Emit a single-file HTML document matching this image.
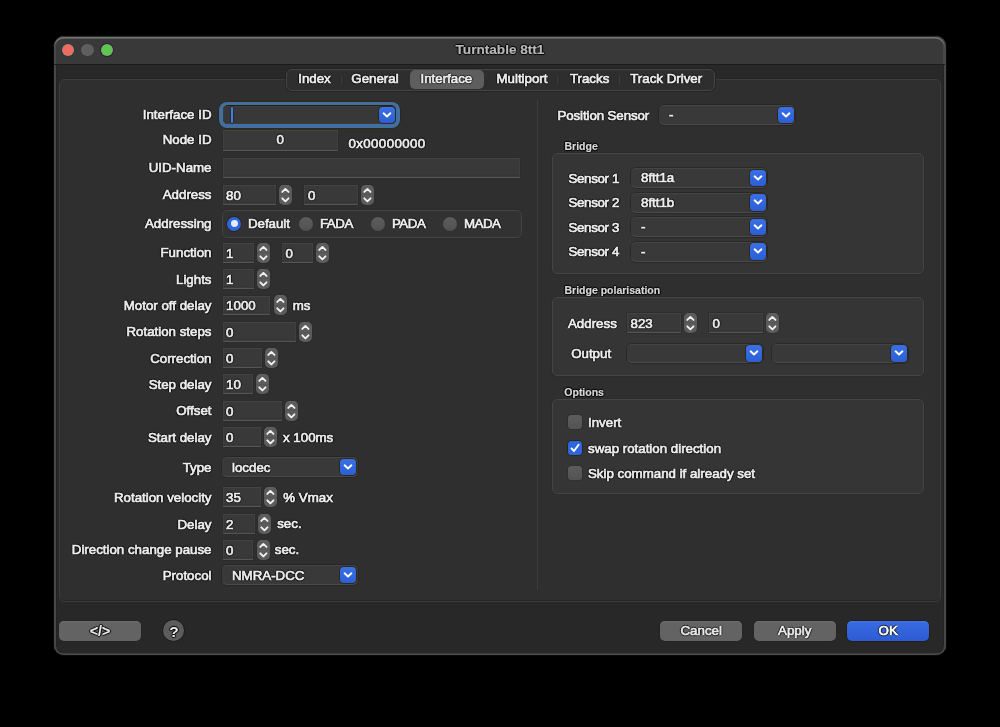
<!DOCTYPE html><html><head><meta charset="utf-8"><title>Turntable 8tt1</title><style>
*{margin:0;padding:0;box-sizing:border-box}
html,body{width:1000px;height:727px;overflow:hidden;background:#000}
body{position:relative;font-family:"Liberation Sans", sans-serif;font-size:13.3px;color:#e6e6e6}
#root{position:absolute;left:0;top:0;width:1000px;height:727px;will-change:transform}
div{position:absolute}
.t,.ft,.pt{white-space:nowrap;line-height:16px;font-size:13.3px;color:#eeeeee;-webkit-text-stroke:0.7px currentColor;text-shadow:1px 0 1px #000,-1px 0 1px #000,0 1px 1px #000,0 -1px 1px #000}
.r{text-align:right}
.c{text-align:center}
.b11{font-size:10.5px;font-weight:bold;color:#d8d8d8;-webkit-text-stroke:0.2px currentColor}
.win{border-radius:10px;background:#282828;box-shadow:0 0 0 0.8px #0c0c0c, inset 2px 0 0 #474747, inset -2px 0 0 #474747, inset 0 -1.5px 0 #4e4e4e, inset 3px 0 0 #232323, inset -3px 0 0 #232323}
.tbar{background:#393939;border-radius:10px 10px 0 0;box-shadow:inset 0 1.5px 0 #777, inset 2px 0 0 #474747, inset -2px 0 0 #474747, 0 1px 0 #1b1b1b}
.tabbox{background:#2f2f2f;border:1px solid #3b3b3b;border-bottom-width:1.4px;border-radius:5px;box-shadow:inset 0 -1px 0 #252525, 0 -0.5px 0 #242424}
.seg{background:#2e2e2e;border:1px solid #454545;border-radius:6px;box-shadow:0 0 0 0.7px #202020}
.segsel{background:#5e5e5e;border-radius:5px}
.segsep{background:#3b3b3b;width:1px}
.fld{background:#393939;box-shadow:0 0 0 0.7px #2b2b2b, inset 0 -1.2px 0 #555, inset 0 -2.2px 0 #333, inset 0 1px 0 #444, inset 1px 0 0 #404040, inset -1px 0 0 #404040}
.ft{position:absolute;left:3.5px;right:3.5px;top:2.9px}
.stp{background:#5c5c5c;border-radius:5px;box-shadow:0 0 0 0.6px #2a2a2a, inset 0 0.5px 0 #686868}
.sm{left:0;right:0;top:50%;height:1px;margin-top:-0.5px;background:#545454}
.su{left:0;top:0;width:13px;height:10px;line-height:0}
.sd{left:0;bottom:0;width:13px;height:10px;line-height:0}
.pop{background:#393939;border-radius:5px;box-shadow:0 0 0 0.8px #262626, inset 0 1px 0 #444, inset 0 -1px 0 #4a4a4a}
.pt{position:absolute;left:10px;top:2.4px}
.pb{right:1.3px;top:1.8px;width:16px;height:16.3px;border-radius:4px;background:linear-gradient(#3a6fe6,#2c5fd6);box-shadow:0 0 0 0.8px #2a2410;line-height:0}
.grp{background:#353535;border:1px solid #454545;border-radius:5px;box-shadow:0 0 0 0.5px #2a2a2a}
.radio{width:14px;height:14px;border-radius:50%;background:linear-gradient(#5c5c5c,#525252);box-shadow:0 0 0 0.6px #2c2c2c}
.rsel{background:#2f66e0;box-shadow:0 0 0 0.8px #2a2410}
.rdot{left:3.6px;top:3.6px;width:6.8px;height:6.8px;border-radius:50%;background:#e4ebfb}
.chk{width:14px;height:14px;border-radius:3.5px;background:linear-gradient(#5c5c5c,#535353);box-shadow:0 0 0 0.6px #2c2c2c}
.csel{background:#2f66e0;box-shadow:0 0 0 0.8px #2a2410}
.btn{background:#636363;border-radius:5px;box-shadow:0 0 0 0.6px #222, inset 0 1px 0 #6d6d6d}
.btnok{background:linear-gradient(#3a6be2,#2c5bd3);box-shadow:0 0 0 0.8px #231d0c, inset 0 1px 0 #4575e4}
</style></head><body><div id="root">
<div class="win" style="left:53.5px;top:35.8px;width:892.2px;height:619.7px;"></div>
<div class="tbar" style="left:54px;top:36.6px;width:891.2px;height:27.3px;"></div>
<div style="left:61.89999999999999px;top:44.099999999999994px;width:12.4px;height:12.4px;border-radius:50%;background:#ee6b5f;box-shadow:0 0 0 0.9px #0d4848"></div>
<div style="left:81.4px;top:44.199999999999996px;width:12.2px;height:12.2px;border-radius:50%;background:#5e5e5e;box-shadow:0 0 0 0.9px #383838"></div>
<div style="left:100.8px;top:44.099999999999994px;width:12.4px;height:12.4px;border-radius:50%;background:#60c452;box-shadow:0 0 0 0.9px #3a1240"></div>
<div class="t c" style="left:400px;width:200px;top:42.40px;font-weight:bold;font-size:13.6px;color:#b8b8b8;-webkit-text-stroke:0.2px currentColor">Turntable 8tt1</div>
<div class="tabbox" style="left:59.2px;top:78.9px;width:881.7px;height:523.1px;"></div>
<div class="" style="left:537px;top:100px;width:1px;height:489.8px;background:#3d3d3d"></div>
<div class="seg" style="left:286px;top:69px;width:429px;height:21.5px;"></div>
<div class="segsel" style="left:409.5px;top:70px;width:74px;height:19.2px;"></div>
<div class="segsep" style="left:340.5px;top:75px;height:10px"></div>
<div class="segsep" style="left:557px;top:75px;height:10px"></div>
<div class="segsep" style="left:619.3px;top:75px;height:10px"></div>
<div class="t c" style="left:214.5px;width:200px;top:71.30px;">Index</div>
<div class="t c" style="left:275px;width:200px;top:71.30px;">General</div>
<div class="t c" style="left:346.4px;width:200px;top:71.30px;">Interface</div>
<div class="t c" style="left:422px;width:200px;top:71.30px;">Multiport</div>
<div class="t c" style="left:489.6px;width:200px;top:71.30px;">Tracks</div>
<div class="t c" style="left:566.2px;width:200px;top:71.30px;">Track Driver</div>
<div class="t r" style="right:788.5px;top:107.10px;">Interface ID</div>
<div class="t r" style="right:788.5px;top:132.10px;">Node ID</div>
<div class="t r" style="right:788.5px;top:160.00px;">UID-Name</div>
<div class="t r" style="right:788.5px;top:186.90px;">Address</div>
<div class="t r" style="right:788.5px;top:215.80px;">Addressing</div>
<div class="t r" style="right:788.5px;top:245.40px;">Function</div>
<div class="t r" style="right:788.5px;top:271.80px;">Lights</div>
<div class="t r" style="right:788.5px;top:298.20px;">Motor off delay</div>
<div class="t r" style="right:788.5px;top:324.20px;">Rotation steps</div>
<div class="t r" style="right:788.5px;top:350.60px;">Correction</div>
<div class="t r" style="right:788.5px;top:377.00px;">Step delay</div>
<div class="t r" style="right:788.5px;top:403.10px;">Offset</div>
<div class="t r" style="right:788.5px;top:429.70px;">Start delay</div>
<div class="t r" style="right:788.5px;top:459.80px;">Type</div>
<div class="t r" style="right:788.5px;top:489.90px;">Rotation velocity</div>
<div class="t r" style="right:788.5px;top:516.80px;">Delay</div>
<div class="t r" style="right:788.5px;top:542.00px;">Direction change pause</div>
<div class="t r" style="right:788.5px;top:567.70px;">Protocol</div>
<div style="left:218.8px;top:101.6px;width:181.4px;height:26.3px;border-radius:8px;background:#41709e;box-shadow:0 0 0 0.6px #2a2410"></div>
<div style="left:222.6px;top:105.4px;width:173.8px;height:18.7px;border-radius:5px;background:#231f12"></div>
<div style="left:223.3px;top:106px;width:172.4px;height:17.5px;border-radius:4.5px;background:#383838;box-shadow:inset 0 0 0 0.7px #404040"></div>
<div style="left:231px;top:107px;width:2.3px;height:16.2px;border-radius:1px;background:#3d7ef2;box-shadow:0 0 0 0.7px #2a2410"></div>
<div class="pb" style="left:379px;top:106.8px;right:auto"><svg width="16" height="16" viewBox="0 0 16 16"><path d="M4.6 6.3 L8 9.5 L11.4 6.3" fill="none" stroke="#ffffff" stroke-width="1.9" stroke-linecap="round" stroke-linejoin="round"/></svg></div>
<div class="fld" style="left:222.6px;top:129.6px;width:115.4px;height:21.2px;"><span class="ft" style="text-align:center">0</span></div>
<div class="t" style="left:348.5px;top:135.60px;letter-spacing:0.38px">0x00000000</div>
<div class="fld" style="left:222.6px;top:157.8px;width:297.9px;height:20.5px;"></div>
<div class="fld" style="left:222.6px;top:185px;width:53.4px;height:19.6px;"><span class="ft" style="text-align:left">80</span></div>
<div class="stp" style="left:279.3px;top:184.5px;width:13px;height:20.5px;"><div class="sm"></div><div class="su"><svg width="13" height="10" viewBox="0 0 13 10"><path d="M3.3 6.9 L6.4 3.9 L9.5 6.9" fill="none" stroke="#f2f2f2" stroke-width="1.9" stroke-linecap="round" stroke-linejoin="round"/></svg></div><div class="sd"><svg width="13" height="10" viewBox="0 0 13 10"><path d="M3.3 3.3 L6.4 6.4 L9.5 3.3" fill="none" stroke="#f2f2f2" stroke-width="1.9" stroke-linecap="round" stroke-linejoin="round"/></svg></div></div>
<div class="fld" style="left:304.4px;top:185px;width:53.6px;height:19.6px;"><span class="ft" style="text-align:left">0</span></div>
<div class="stp" style="left:361.3px;top:184.5px;width:13px;height:20.5px;"><div class="sm"></div><div class="su"><svg width="13" height="10" viewBox="0 0 13 10"><path d="M3.3 6.9 L6.4 3.9 L9.5 6.9" fill="none" stroke="#f2f2f2" stroke-width="1.9" stroke-linecap="round" stroke-linejoin="round"/></svg></div><div class="sd"><svg width="13" height="10" viewBox="0 0 13 10"><path d="M3.3 3.3 L6.4 6.4 L9.5 3.3" fill="none" stroke="#f2f2f2" stroke-width="1.9" stroke-linecap="round" stroke-linejoin="round"/></svg></div></div>
<div class="grp" style="left:221.5px;top:210.4px;width:300.2px;height:27.2px;background:#323232;border-color:#454545"></div>
<div class="radio rsel" style="left:227.4px;top:216.9px"><div class="rdot"></div></div>
<div class="t" style="left:247.9px;top:216.00px;">Default</div>
<div class="radio" style="left:299.4px;top:216.9px"></div>
<div class="t" style="left:319.9px;top:216.00px;letter-spacing:-0.45px">FADA</div>
<div class="radio" style="left:371.4px;top:216.9px"></div>
<div class="t" style="left:391.9px;top:216.00px;letter-spacing:-0.45px">PADA</div>
<div class="radio" style="left:443.4px;top:216.9px"></div>
<div class="t" style="left:463.9px;top:216.00px;letter-spacing:-0.45px">MADA</div>
<div class="fld" style="left:222.6px;top:243px;width:31.4px;height:19.7px;"><span class="ft" style="text-align:left">1</span></div>
<div class="stp" style="left:257.3px;top:242.8px;width:13px;height:20.2px;"><div class="sm"></div><div class="su"><svg width="13" height="10" viewBox="0 0 13 10"><path d="M3.3 6.9 L6.4 3.9 L9.5 6.9" fill="none" stroke="#f2f2f2" stroke-width="1.9" stroke-linecap="round" stroke-linejoin="round"/></svg></div><div class="sd"><svg width="13" height="10" viewBox="0 0 13 10"><path d="M3.3 3.3 L6.4 6.4 L9.5 3.3" fill="none" stroke="#f2f2f2" stroke-width="1.9" stroke-linecap="round" stroke-linejoin="round"/></svg></div></div>
<div class="fld" style="left:282px;top:243px;width:31px;height:19.7px;"><span class="ft" style="text-align:left">0</span></div>
<div class="stp" style="left:316.3px;top:242.8px;width:13px;height:20.2px;"><div class="sm"></div><div class="su"><svg width="13" height="10" viewBox="0 0 13 10"><path d="M3.3 6.9 L6.4 3.9 L9.5 6.9" fill="none" stroke="#f2f2f2" stroke-width="1.9" stroke-linecap="round" stroke-linejoin="round"/></svg></div><div class="sd"><svg width="13" height="10" viewBox="0 0 13 10"><path d="M3.3 3.3 L6.4 6.4 L9.5 3.3" fill="none" stroke="#f2f2f2" stroke-width="1.9" stroke-linecap="round" stroke-linejoin="round"/></svg></div></div>
<div class="fld" style="left:222.6px;top:269px;width:31.4px;height:19.7px;"><span class="ft" style="text-align:left">1</span></div>
<div class="stp" style="left:257.3px;top:268.8px;width:13px;height:20.2px;"><div class="sm"></div><div class="su"><svg width="13" height="10" viewBox="0 0 13 10"><path d="M3.3 6.9 L6.4 3.9 L9.5 6.9" fill="none" stroke="#f2f2f2" stroke-width="1.9" stroke-linecap="round" stroke-linejoin="round"/></svg></div><div class="sd"><svg width="13" height="10" viewBox="0 0 13 10"><path d="M3.3 3.3 L6.4 6.4 L9.5 3.3" fill="none" stroke="#f2f2f2" stroke-width="1.9" stroke-linecap="round" stroke-linejoin="round"/></svg></div></div>
<div class="fld" style="left:222.6px;top:295.5px;width:47.699999999999996px;height:19.7px;"><span class="ft" style="text-align:left">1000</span></div>
<div class="stp" style="left:273.5px;top:295.3px;width:13px;height:20.2px;"><div class="sm"></div><div class="su"><svg width="13" height="10" viewBox="0 0 13 10"><path d="M3.3 6.9 L6.4 3.9 L9.5 6.9" fill="none" stroke="#f2f2f2" stroke-width="1.9" stroke-linecap="round" stroke-linejoin="round"/></svg></div><div class="sd"><svg width="13" height="10" viewBox="0 0 13 10"><path d="M3.3 3.3 L6.4 6.4 L9.5 3.3" fill="none" stroke="#f2f2f2" stroke-width="1.9" stroke-linecap="round" stroke-linejoin="round"/></svg></div></div>
<div class="t" style="left:292.8px;top:297.90px;">ms</div>
<div class="fld" style="left:222.6px;top:322.2px;width:73.4px;height:19.7px;"><span class="ft" style="text-align:left">0</span></div>
<div class="stp" style="left:299.1px;top:322.0px;width:13px;height:20.2px;"><div class="sm"></div><div class="su"><svg width="13" height="10" viewBox="0 0 13 10"><path d="M3.3 6.9 L6.4 3.9 L9.5 6.9" fill="none" stroke="#f2f2f2" stroke-width="1.9" stroke-linecap="round" stroke-linejoin="round"/></svg></div><div class="sd"><svg width="13" height="10" viewBox="0 0 13 10"><path d="M3.3 3.3 L6.4 6.4 L9.5 3.3" fill="none" stroke="#f2f2f2" stroke-width="1.9" stroke-linecap="round" stroke-linejoin="round"/></svg></div></div>
<div class="fld" style="left:222.6px;top:348.3px;width:39.6px;height:19.7px;"><span class="ft" style="text-align:left">0</span></div>
<div class="stp" style="left:265.1px;top:348.1px;width:13px;height:20.2px;"><div class="sm"></div><div class="su"><svg width="13" height="10" viewBox="0 0 13 10"><path d="M3.3 6.9 L6.4 3.9 L9.5 6.9" fill="none" stroke="#f2f2f2" stroke-width="1.9" stroke-linecap="round" stroke-linejoin="round"/></svg></div><div class="sd"><svg width="13" height="10" viewBox="0 0 13 10"><path d="M3.3 3.3 L6.4 6.4 L9.5 3.3" fill="none" stroke="#f2f2f2" stroke-width="1.9" stroke-linecap="round" stroke-linejoin="round"/></svg></div></div>
<div class="fld" style="left:222.6px;top:374.4px;width:30.599999999999998px;height:19.7px;"><span class="ft" style="text-align:left">10</span></div>
<div class="stp" style="left:256.1px;top:374.2px;width:13px;height:20.2px;"><div class="sm"></div><div class="su"><svg width="13" height="10" viewBox="0 0 13 10"><path d="M3.3 6.9 L6.4 3.9 L9.5 6.9" fill="none" stroke="#f2f2f2" stroke-width="1.9" stroke-linecap="round" stroke-linejoin="round"/></svg></div><div class="sd"><svg width="13" height="10" viewBox="0 0 13 10"><path d="M3.3 3.3 L6.4 6.4 L9.5 3.3" fill="none" stroke="#f2f2f2" stroke-width="1.9" stroke-linecap="round" stroke-linejoin="round"/></svg></div></div>
<div class="fld" style="left:222.6px;top:401px;width:59.4px;height:19.7px;"><span class="ft" style="text-align:left">0</span></div>
<div class="stp" style="left:285.3px;top:400.8px;width:13px;height:20.2px;"><div class="sm"></div><div class="su"><svg width="13" height="10" viewBox="0 0 13 10"><path d="M3.3 6.9 L6.4 3.9 L9.5 6.9" fill="none" stroke="#f2f2f2" stroke-width="1.9" stroke-linecap="round" stroke-linejoin="round"/></svg></div><div class="sd"><svg width="13" height="10" viewBox="0 0 13 10"><path d="M3.3 3.3 L6.4 6.4 L9.5 3.3" fill="none" stroke="#f2f2f2" stroke-width="1.9" stroke-linecap="round" stroke-linejoin="round"/></svg></div></div>
<div class="fld" style="left:222.6px;top:427.3px;width:38.4px;height:19.7px;"><span class="ft" style="text-align:left">0</span></div>
<div class="stp" style="left:264.1px;top:427.1px;width:13px;height:20.2px;"><div class="sm"></div><div class="su"><svg width="13" height="10" viewBox="0 0 13 10"><path d="M3.3 6.9 L6.4 3.9 L9.5 6.9" fill="none" stroke="#f2f2f2" stroke-width="1.9" stroke-linecap="round" stroke-linejoin="round"/></svg></div><div class="sd"><svg width="13" height="10" viewBox="0 0 13 10"><path d="M3.3 3.3 L6.4 6.4 L9.5 3.3" fill="none" stroke="#f2f2f2" stroke-width="1.9" stroke-linecap="round" stroke-linejoin="round"/></svg></div></div>
<div class="t" style="left:283px;top:429.70px;">x 100ms</div>
<div class="fld" style="left:222.6px;top:487.2px;width:38.4px;height:19.7px;"><span class="ft" style="text-align:left">35</span></div>
<div class="stp" style="left:264.1px;top:487.0px;width:13px;height:20.2px;"><div class="sm"></div><div class="su"><svg width="13" height="10" viewBox="0 0 13 10"><path d="M3.3 6.9 L6.4 3.9 L9.5 6.9" fill="none" stroke="#f2f2f2" stroke-width="1.9" stroke-linecap="round" stroke-linejoin="round"/></svg></div><div class="sd"><svg width="13" height="10" viewBox="0 0 13 10"><path d="M3.3 3.3 L6.4 6.4 L9.5 3.3" fill="none" stroke="#f2f2f2" stroke-width="1.9" stroke-linecap="round" stroke-linejoin="round"/></svg></div></div>
<div class="t" style="left:283.3px;top:489.60px;">% Vmax</div>
<div class="fld" style="left:222.6px;top:514px;width:32.4px;height:19.7px;"><span class="ft" style="text-align:left">2</span></div>
<div class="stp" style="left:258.1px;top:513.8px;width:13px;height:20.2px;"><div class="sm"></div><div class="su"><svg width="13" height="10" viewBox="0 0 13 10"><path d="M3.3 6.9 L6.4 3.9 L9.5 6.9" fill="none" stroke="#f2f2f2" stroke-width="1.9" stroke-linecap="round" stroke-linejoin="round"/></svg></div><div class="sd"><svg width="13" height="10" viewBox="0 0 13 10"><path d="M3.3 3.3 L6.4 6.4 L9.5 3.3" fill="none" stroke="#f2f2f2" stroke-width="1.9" stroke-linecap="round" stroke-linejoin="round"/></svg></div></div>
<div class="t" style="left:277.2px;top:516.40px;">sec.</div>
<div class="fld" style="left:222.6px;top:540px;width:30.4px;height:19.7px;"><span class="ft" style="text-align:left">0</span></div>
<div class="stp" style="left:256.5px;top:539.8px;width:13px;height:20.2px;"><div class="sm"></div><div class="su"><svg width="13" height="10" viewBox="0 0 13 10"><path d="M3.3 6.9 L6.4 3.9 L9.5 6.9" fill="none" stroke="#f2f2f2" stroke-width="1.9" stroke-linecap="round" stroke-linejoin="round"/></svg></div><div class="sd"><svg width="13" height="10" viewBox="0 0 13 10"><path d="M3.3 3.3 L6.4 6.4 L9.5 3.3" fill="none" stroke="#f2f2f2" stroke-width="1.9" stroke-linecap="round" stroke-linejoin="round"/></svg></div></div>
<div class="t" style="left:274.8px;top:542.40px;">sec.</div>
<div class="pop" style="left:222px;top:457.2px;width:135.5px;height:20px;"><span class="pt">locdec</span><div class="pb"><svg width="16" height="16" viewBox="0 0 16 16"><path d="M4.6 6.3 L8 9.5 L11.4 6.3" fill="none" stroke="#ffffff" stroke-width="1.9" stroke-linecap="round" stroke-linejoin="round"/></svg></div></div>
<div class="pop" style="left:222px;top:565.4px;width:135.5px;height:20px;"><span class="pt">NMRA-DCC</span><div class="pb"><svg width="16" height="16" viewBox="0 0 16 16"><path d="M4.6 6.3 L8 9.5 L11.4 6.3" fill="none" stroke="#ffffff" stroke-width="1.9" stroke-linecap="round" stroke-linejoin="round"/></svg></div></div>
<div class="t" style="left:557.5px;top:107.90px;letter-spacing:-0.1px">Position Sensor</div>
<div class="pop" style="left:659px;top:105px;width:136.3px;height:19.8px;"><span class="pt">-</span><div class="pb"><svg width="16" height="16" viewBox="0 0 16 16"><path d="M4.6 6.3 L8 9.5 L11.4 6.3" fill="none" stroke="#ffffff" stroke-width="1.9" stroke-linecap="round" stroke-linejoin="round"/></svg></div></div>
<div class="t b11" style="left:564.5px;top:137.80px;">Bridge</div>
<div class="grp" style="left:552.4px;top:153px;width:371.6px;height:120.5px;"></div>
<div class="t" style="left:568.4px;top:170.60px;letter-spacing:-0.3px">Sensor 1</div>
<div class="pop" style="left:631px;top:168.1px;width:136px;height:20px;"><span class="pt">8ftt1a</span><div class="pb"><svg width="16" height="16" viewBox="0 0 16 16"><path d="M4.6 6.3 L8 9.5 L11.4 6.3" fill="none" stroke="#ffffff" stroke-width="1.9" stroke-linecap="round" stroke-linejoin="round"/></svg></div></div>
<div class="t" style="left:568.4px;top:195.10px;letter-spacing:-0.3px">Sensor 2</div>
<div class="pop" style="left:631px;top:192.6px;width:136px;height:20px;"><span class="pt">8ftt1b</span><div class="pb"><svg width="16" height="16" viewBox="0 0 16 16"><path d="M4.6 6.3 L8 9.5 L11.4 6.3" fill="none" stroke="#ffffff" stroke-width="1.9" stroke-linecap="round" stroke-linejoin="round"/></svg></div></div>
<div class="t" style="left:568.4px;top:219.60px;letter-spacing:-0.3px">Sensor 3</div>
<div class="pop" style="left:631px;top:217.1px;width:136px;height:20px;"><span class="pt">-</span><div class="pb"><svg width="16" height="16" viewBox="0 0 16 16"><path d="M4.6 6.3 L8 9.5 L11.4 6.3" fill="none" stroke="#ffffff" stroke-width="1.9" stroke-linecap="round" stroke-linejoin="round"/></svg></div></div>
<div class="t" style="left:568.4px;top:244.10px;letter-spacing:-0.3px">Sensor 4</div>
<div class="pop" style="left:631px;top:241.6px;width:136px;height:20px;"><span class="pt">-</span><div class="pb"><svg width="16" height="16" viewBox="0 0 16 16"><path d="M4.6 6.3 L8 9.5 L11.4 6.3" fill="none" stroke="#ffffff" stroke-width="1.9" stroke-linecap="round" stroke-linejoin="round"/></svg></div></div>
<div class="t b11" style="left:564.5px;top:282.30px;">Bridge polarisation</div>
<div class="grp" style="left:552.4px;top:297px;width:371.6px;height:78.5px;"></div>
<div class="t" style="left:568px;top:316.20px;">Address</div>
<div class="fld" style="left:627px;top:312.8px;width:54px;height:20.2px;"><span class="ft" style="text-align:left">823</span></div>
<div class="stp" style="left:684px;top:312.6px;width:13px;height:20.6px;"><div class="sm"></div><div class="su"><svg width="13" height="10" viewBox="0 0 13 10"><path d="M3.3 6.9 L6.4 3.9 L9.5 6.9" fill="none" stroke="#f2f2f2" stroke-width="1.9" stroke-linecap="round" stroke-linejoin="round"/></svg></div><div class="sd"><svg width="13" height="10" viewBox="0 0 13 10"><path d="M3.3 3.3 L6.4 6.4 L9.5 3.3" fill="none" stroke="#f2f2f2" stroke-width="1.9" stroke-linecap="round" stroke-linejoin="round"/></svg></div></div>
<div class="fld" style="left:709px;top:312.8px;width:54px;height:20.2px;"><span class="ft" style="text-align:left">0</span></div>
<div class="stp" style="left:766px;top:312.6px;width:13px;height:20.6px;"><div class="sm"></div><div class="su"><svg width="13" height="10" viewBox="0 0 13 10"><path d="M3.3 6.9 L6.4 3.9 L9.5 6.9" fill="none" stroke="#f2f2f2" stroke-width="1.9" stroke-linecap="round" stroke-linejoin="round"/></svg></div><div class="sd"><svg width="13" height="10" viewBox="0 0 13 10"><path d="M3.3 3.3 L6.4 6.4 L9.5 3.3" fill="none" stroke="#f2f2f2" stroke-width="1.9" stroke-linecap="round" stroke-linejoin="round"/></svg></div></div>
<div class="t" style="left:571.2px;top:346.30px;">Output</div>
<div class="pop" style="left:626.5px;top:343.7px;width:136.4px;height:19.3px;"><span class="pt"></span><div class="pb"><svg width="16" height="16" viewBox="0 0 16 16"><path d="M4.6 6.3 L8 9.5 L11.4 6.3" fill="none" stroke="#ffffff" stroke-width="1.9" stroke-linecap="round" stroke-linejoin="round"/></svg></div></div>
<div class="pop" style="left:772.3px;top:343.7px;width:136.2px;height:19.3px;"><span class="pt"></span><div class="pb"><svg width="16" height="16" viewBox="0 0 16 16"><path d="M4.6 6.3 L8 9.5 L11.4 6.3" fill="none" stroke="#ffffff" stroke-width="1.9" stroke-linecap="round" stroke-linejoin="round"/></svg></div></div>
<div class="t b11" style="left:564.3px;top:384.00px;">Options</div>
<div class="grp" style="left:552.4px;top:398.9px;width:371.6px;height:95.1px;"></div>
<div class="chk" style="left:568px;top:415.2px"></div>
<div class="t" style="left:588px;top:415.10px;">Invert</div>
<div class="chk csel" style="left:568px;top:440.7px"><svg width="14" height="14" viewBox="0 0 14 14" style="position:absolute;left:0;top:0"><path d="M3.5 7.4 L6 10 L10.6 3.8" fill="none" stroke="#fff" stroke-width="1.9" stroke-linecap="round" stroke-linejoin="round"/></svg></div>
<div class="t" style="left:588px;top:440.60px;">swap rotation direction</div>
<div class="chk" style="left:568px;top:466.2px"></div>
<div class="t" style="left:588px;top:466.10px;">Skip command if already set</div>
<div class="btn" style="left:59.2px;top:620.5px;width:81.5px;height:20px;"></div>
<div class="t c" style="left:0px;width:200px;top:623.00px;font-weight:bold;font-size:14.3px;color:#ececec;-webkit-text-stroke:0.1px currentColor">&lt;/&gt;</div>
<div style="left:163.4px;top:619.5px;width:20.8px;height:21px;border-radius:50%;background:#5c5c5c;box-shadow:0 0 0 0.8px #1c1c1c"></div>
<div class="t c" style="left:73.9px;width:200px;top:623.60px;font-weight:bold;font-size:15.5px;color:#eee;-webkit-text-stroke:0px">?</div>
<div class="btn" style="left:660.2px;top:620.5px;width:82px;height:20px;"></div>
<div class="t c" style="left:601.2px;width:200px;top:622.70px;color:#eaeaea">Cancel</div>
<div class="btn" style="left:753.7px;top:620.5px;width:82px;height:20px;"></div>
<div class="t c" style="left:694.7px;width:200px;top:622.70px;color:#eaeaea">Apply</div>
<div class="btn btnok" style="left:847.2px;top:620.5px;width:82px;height:20px;"></div>
<div class="t c" style="left:788.2px;width:200px;top:622.70px;color:#fff">OK</div>
</div></body></html>
